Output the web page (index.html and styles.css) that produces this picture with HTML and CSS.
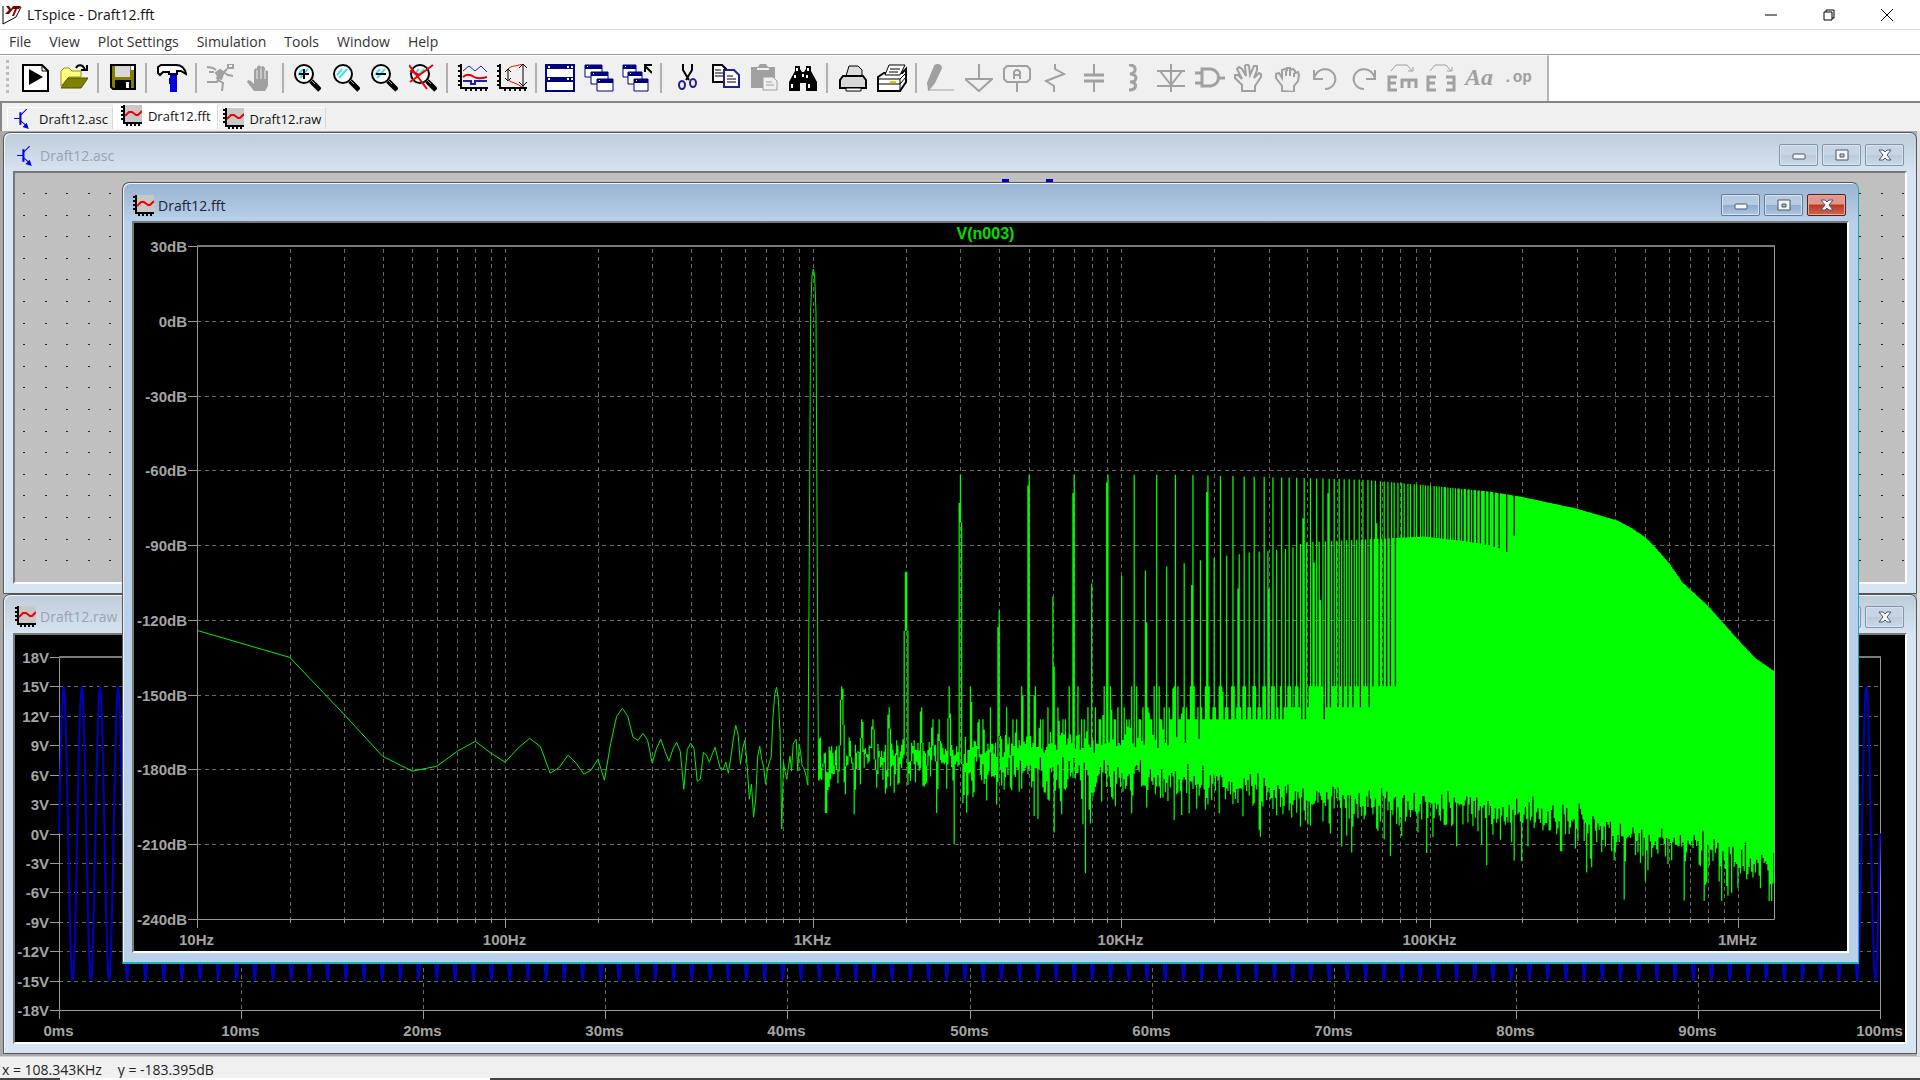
FILE: index.html
```
<!DOCTYPE html>
<html lang="en">
<head>
    <meta charset="UTF-8">
    <meta name="viewport" content="width=device-width, initial-scale=1.0">
    <title>LTspice - Draft12.fft</title>
    <link rel="stylesheet" href="styles.css">
</head>
<body>
    <!-- Shared icons -->
    <svg class="symbols" aria-hidden="true">
        <symbol id="icon-chart" viewBox="0 0 21 21">
            <path d="M3 0h18v18H3z" fill="#c8c8c8"/>
            <path d="M3 0v18h18" fill="none" stroke="#000" stroke-width="2"/>
            <path d="M0 2h3M0 6h3M0 10h3M0 14h3M6 18v3M10 18v3M14 18v3M18 18v3" fill="none" stroke="#000" stroke-width="2"/>
            <path d="M4 11l4-4h3l4 3h2l4-4" fill="none" stroke="#f00000" stroke-width="2"/>
        </symbol>
        <symbol id="icon-transistor" viewBox="0 0 16 20">
            <path d="M0 10h6M12 1L6 7M6 12l7 6" fill="none" stroke="#0000e0" stroke-width="1"/>
            <path d="M5 4h2v12H5zM14 20l-6-2 4-4z" fill="#0000f0"/>
        </symbol>
        <symbol id="icon-min" viewBox="0 0 14 12">
            <rect x="1" y="5" width="12" height="5" rx="1" fill="#f4f6fa" stroke="#4d566b"/>
        </symbol>
        <symbol id="icon-max" viewBox="0 0 14 12">
            <path d="M1 1h12v10H1zM5 5v3h4V5z" fill="#f4f6fa" stroke="#4d566b" fill-rule="evenodd"/>
        </symbol>
        <symbol id="icon-close" viewBox="0 0 14 12">
            <path d="M1 1h4l2 2 2-2h4L9 6l4 5H9L7 9l-2 2H1l4-5z" fill="#fafafa" stroke="#4d566b"/>
        </symbol>
        <symbol id="icon-lens" viewBox="0 0 28 28">
            <circle cx="11" cy="10" r="9" fill="#fff" stroke="#000" stroke-width="2"/>
            <path d="M5 11l5-6M7 14l8-9" stroke="#40e0f0" stroke-width="2"/>
            <path d="M18 17l9 9" stroke="#000" stroke-width="5"/>
            <path d="M18 16l4 4" stroke="#999" stroke-width="1"/>
        </symbol>
    </svg>

    <header class="title-bar">
        <svg class="app-logo" viewBox="0 0 20 20" aria-hidden="true">
            <path d="M1 1v18l13-7L19 2" fill="#fff" stroke="#000"/>
            <path d="M4 1h3l2 3 2-3h8l-2 3h-2l-3 7h-2l3-7h-2l-4 5H3l4-4z" fill="#800000"/>
        </svg>
        <h1 class="app-title">LTspice - Draft12.fft</h1>
        <div class="app-controls">
            <button class="app-btn" aria-label="Minimize"><svg viewBox="0 0 12 12"><path d="M0 6h12"/></svg></button>
            <button class="app-btn" aria-label="Restore"><svg viewBox="0 0 12 12"><path d="M1 3h8v8H1zM3 3V1h8v8H9"/></svg></button>
            <button class="app-btn" aria-label="Close"><svg viewBox="0 0 12 12"><path d="M0 0l12 12M12 0L0 12"/></svg></button>
        </div>
    </header>

    <nav class="menu-bar">
        <button class="menu-item">File</button>
        <button class="menu-item">View</button>
        <button class="menu-item">Plot Settings</button>
        <button class="menu-item">Simulation</button>
        <button class="menu-item">Tools</button>
        <button class="menu-item">Window</button>
        <button class="menu-item">Help</button>
    </nav>

    <div class="toolbar-row">
        <div class="toolbar">
            <span class="grip"></span>
            <div class="tool-group">
                <button class="tool" aria-label="New schematic"><svg viewBox="0 0 28 28"><path d="M2 1h19l6 6v20H2z" fill="#fff" stroke="#000" stroke-width="2"/><path d="M21 1v6h6" fill="none" stroke="#000"/><path d="M8 5l14 8-14 8z"/></svg></button>
                <button class="tool" aria-label="Open"><svg viewBox="0 0 28 28"><path d="M1 22V7l3-3h5l3 3h9v6H9z" fill="#ffff80" stroke="#999900"/><path d="M1 24l7-10h20l-7 10z" fill="#808000" stroke="#505000"/><path d="M16 4c2-4 7-4 9 2M21 6h6V1" fill="none" stroke="#000" stroke-width="2"/></svg></button>
            </div>
            <span class="divider"></span>
            <div class="tool-group">
                <button class="tool" aria-label="Save"><svg viewBox="0 0 28 28"><path d="M3 1h24v24H5l-2-2z" fill="#808000" stroke="#000" stroke-width="2"/><path d="M7 2h15v11H7z" fill="#d8d8d8"/><path d="M23 2h3v4h-3z" fill="#fff"/><path d="M7 16h16v9H7z"/><path d="M18 18h3v6h-3z" fill="#fff"/></svg></button>
            </div>
            <span class="divider divider-wide"></span>
            <div class="tool-group">
                <button class="tool" aria-label="Control panel"><svg viewBox="0 0 30 28"><path d="M1 3l3-2h15c6 0 9 4 10 9l-5-3h-4v3H12V8H6l-3 3-2-2z" fill="#fff" stroke="#000" stroke-width="2"/><path d="M13 11h7v17h-7z" fill="#0000e8"/><path d="M12 14h2v6h-2z" fill="#000080"/></svg></button>
            </div>
            <span class="divider"></span>
            <div class="tool-group">
                <button class="tool" aria-label="Run" disabled><svg viewBox="0 0 28 28"><path d="M22 0h5v4h-5zM1 3l6 1 3 2M3 8h5M21 5l-8 8-3-4 4-3 8 5 5 1M14 10l-3 8H1M12 16l5 3-1 8" fill="none" stroke="#a0a0a0" stroke-width="2"/><path d="M12 7l7 0-3 9-6-1z" fill="#a0a0a0"/></svg></button>
                <button class="tool" aria-label="Halt" disabled><svg viewBox="0 0 28 28"><path d="M9 27l-7-9 1-2 3 1 3 3V6l2-2 1 1V3l2-2 2 2 2-1 2 2v2l3 1v15l-3 5z" fill="#a0a0a0"/><path d="M12 6v9M16 4v11M20 6v9" stroke="#f0f0f0"/></svg></button>
            </div>
            <span class="divider"></span>
            <div class="tool-group">
                <button class="tool" aria-label="Zoom in"><svg viewBox="0 0 28 28"><use href="#icon-lens"/><path d="M6 10h10M11 5v10" stroke="#000" stroke-width="2"/></svg></button>
                <button class="tool" aria-label="Pan"><svg viewBox="0 0 28 28"><use href="#icon-lens"/></svg></button>
                <button class="tool" aria-label="Zoom out"><svg viewBox="0 0 28 28"><use href="#icon-lens"/><path d="M6 10h10" stroke="#000" stroke-width="2"/></svg></button>
                <button class="tool" aria-label="Zoom full extents"><svg viewBox="0 0 28 28"><use href="#icon-lens"/><path d="M0 1l18 24M24 1L1 18M1 7l10 4" stroke="#f00000" stroke-width="2"/></svg></button>
            </div>
            <span class="divider divider-wide"></span>
            <div class="tool-group">
                <button class="tool" aria-label="Autorange"><svg viewBox="0 0 30 28"><path d="M3 0v24h27M0 2h3M0 7h3M0 12h3M0 17h3M0 21h3M8 24v3M13 24v3M18 24v3M23 24v3M28 24v3" fill="none" stroke="#000" stroke-width="2"/><path d="M5 7l6-5 6 5 6-5 6 6" fill="none" stroke="#2020b0"/><path d="M5 13c4-4 8-2 11 0s6 2 13 0" fill="none" stroke="#e00000" stroke-width="2"/><path d="M5 17h8v3h4v-3h12" fill="none" stroke="#2020b0" stroke-width="2"/></svg></button>
                <button class="tool" aria-label="Plot limits"><svg viewBox="0 0 30 28"><path d="M3 0v24h27M0 2h3M0 7h3M0 12h3M0 17h3M0 21h3M8 24v3M13 24v3M18 24v3M23 24v3M28 24v3" fill="none" stroke="#000" stroke-width="2"/><path d="M11 5v12M8 8l3-3 3 3M8 14l3 3 3-3M26 0v23M22 4l4-4 4 4M22 18l4 4 4-4" fill="none" stroke="#000"/><path d="M11 5C15 1 18 3 25 0M11 16c4 3 9 3 14 7" fill="none" stroke="#f00000"/></svg></button>
            </div>
            <span class="divider"></span>
            <div class="tool-group">
                <button class="tool" aria-label="Tile"><svg viewBox="0 0 30 28"><path d="M1 1h28v26H1z" fill="#fff" stroke="#000080" stroke-width="2"/><path d="M1 1h28v4H1zM1 13h28v5H1z" fill="#000080"/><path d="M3 2h2v2H3zM22 2h2v2h-2zM26 2h2v2h-2zM3 14h2v2H3zM22 14h2v2h-2zM26 14h2v2h-2z" fill="#fff"/></svg></button>
                <button class="tool" aria-label="Cascade"><svg viewBox="0 0 30 28"><g fill="#fff" stroke="#000080"><path d="M1 1h17v12H1z"/><path d="M7 8h17v12H7z"/><path d="M13 15h16v12H13z"/></g><path d="M1 1h17v4H1zM7 8h17v4H7zM13 15h16v4H13z" fill="#000080"/><path d="M3 2h1v1H3zM9 9h1v1H9zM15 16h1v1h-1z" fill="#fff"/></svg></button>
                <button class="tool" aria-label="Restore windows"><svg viewBox="0 0 30 28"><g fill="#fff" stroke="#000080"><path d="M1 1h13v12H1z"/><path d="M6 8h14v12H6z"/><path d="M12 15h14v12H12z"/></g><path d="M1 1h13v4H1zM6 8h14v4H6zM12 15h14v4H12z" fill="#000080"/><path d="M3 2h1v1H3zM8 9h1v1H8zM14 16h1v1h-1z" fill="#fff"/><path d="M30 9l-7-7M23 8V1h7" fill="none" stroke="#000" stroke-width="2"/></svg></button>
            </div>
            <span class="divider divider-wide"></span>
            <div class="tool-group">
                <button class="tool" aria-label="Cut"><svg viewBox="0 0 28 28"><path d="M10 0v6l6 10M19 0v6l-6 10" fill="none" stroke="#000" stroke-width="2"/><g fill="none" stroke="#202090" stroke-width="2"><ellipse cx="9" cy="21" rx="3" ry="4"/><ellipse cx="20" cy="19" rx="3" ry="4"/></g></svg></button>
                <button class="tool" aria-label="Copy"><svg viewBox="0 0 28 28"><path d="M1 1h9l4 4v13H1z" fill="#fff" stroke="#000" stroke-width="2"/><path d="M3 6h6M3 9h8M3 12h8" stroke="#000"/><path d="M12 6h10l5 5v12H12z" fill="#fff" stroke="#202090" stroke-width="2"/><path d="M15 12h6M15 15h9M15 18h9" stroke="#000"/></svg></button>
                <button class="tool" aria-label="Paste" disabled><svg viewBox="0 0 28 28"><path d="M1 3h7l2-3h6l2 3h7v21H1z" fill="#a0a0a0"/><path d="M7 4h12v2H7z" fill="#f0f0f0"/><path d="M13 13h10l4 4v9H13z" fill="#f0f0f0" stroke="#a0a0a0"/><path d="M16 18h6M16 21h8" stroke="#a0a0a0"/></svg></button>
                <button class="tool" aria-label="Find"><svg viewBox="0 0 30 28"><path d="M7 2h5v3l2 3h2l2-3V2h5v5l6 11v9H18v-8h-6v8H1v-9L7 7z"/><path d="M8 4h2v3H8zM6 11h2v3H6zM3 20h2v4H3zM19 4h2v3h-2zM18 11h2v3h-2zM20 20h2v4h-2zM14 10h2v3h-2z" fill="#fff"/></svg></button>
            </div>
            <span class="divider divider-wide"></span>
            <div class="tool-group">
                <button class="tool" aria-label="Print"><svg viewBox="0 0 28 28"><path d="M7 12l3-10h9l4 4v6" fill="#ddd" stroke="#000"/><path d="M4 12h20l3 4v8H1v-8z" fill="#d8d8d8" stroke="#000" stroke-width="2"/><path d="M7 24h15v3H7z" fill="#fff" stroke="#000"/></svg></button>
                <button class="tool" aria-label="Print setup"><svg viewBox="0 0 30 28"><path d="M1 13l6-4h18l4-4v13l-6 9H1z" fill="#fff" stroke="#000" stroke-width="2"/><path d="M8 11l4-10h16l-5 10z" fill="#fff" stroke="#000"/><path d="M13 5h10M12 8h9M1 15h22v12M1 20h22l6-7M23 15l6-6" fill="none" stroke="#000"/><path d="M13 18h6" stroke="#d0d000" stroke-width="2"/></svg></button>
            </div>
            <span class="divider"></span>
            <div class="tool-group tool-group-edit">
                <button class="tool" aria-label="Wire" disabled><svg viewBox="0 0 28 28"><path d="M2 19L9 2c2-2 6-1 6 2L8 19l-5 6z" fill="#a0a0a0"/><path d="M2 25v1h26" fill="none" stroke="#a0a0a0" stroke-width="1"/></svg></button>
                <button class="tool" aria-label="Ground" disabled><svg viewBox="0 0 28 28"><path d="M14 0v15M0 15h27L14 27z"/></svg></button>
                <button class="tool" aria-label="Label net" disabled><svg viewBox="0 0 28 28"><path d="M4 2h20l3 3v10l-3 3H4l-3-3V5zM14 19v9M11 15V8l2-2h2l2 2v7M11 11h6"/></svg></button>
                <button class="tool" aria-label="Resistor" disabled><svg viewBox="0 0 28 28"><path d="M13 0v5l9 5L4 17l8 5v6"/></svg></button>
                <button class="tool" aria-label="Capacitor" disabled><svg viewBox="0 0 28 28"><path d="M14 0v10M14 18v10"/><path d="M4 11h20M4 17h20" stroke-width="3"/></svg></button>
                <button class="tool" aria-label="Inductor" disabled><svg viewBox="0 0 28 28"><path d="M10 1c8 0 8 8 1 9 8 0 8 8 0 8 8 0 7 8-1 8" stroke-width="3"/></svg></button>
                <button class="tool" aria-label="Diode" disabled><svg viewBox="0 0 30 28"><path d="M15 0v28M1 7h28M4 7l11 14L26 7M1 22h28"/></svg></button>
                <button class="tool" aria-label="Component" disabled><svg viewBox="0 0 30 28"><path d="M7 5h9c10 2 10 15 0 17H7zM0 9h7M0 19h7M23 14h7" stroke-width="3"/></svg></button>
                <button class="tool" aria-label="Move" disabled><svg viewBox="0 0 28 28"><path d="M8 27v-6L1 14v-3h3l4 4L3 5l2-2 3 2 4 7-1-10 2-2 2 2 1 9 4-9h3v4l-3 8 5-5 2 1v3l-6 9v5z"/></svg></button>
                <button class="tool" aria-label="Drag" disabled><svg viewBox="0 0 28 28"><path d="M9 27v-5l-6-8v-4l3-1 3 5V6l3-1 2 1V4h3v2l3-1 2 2v2l3-1 1 3-1 6-4 5v6zM13 7v5M17 7v5M21 9v4"/></svg></button>
                <button class="tool" aria-label="Undo" disabled><svg viewBox="0 0 28 28"><path d="M3 14C7 3 18 3 23 10c4 8-2 15-9 15M3 6v9h9"/></svg></button>
                <button class="tool" aria-label="Redo" disabled><svg viewBox="0 0 28 28"><path d="M25 14C21 3 10 3 5 10c-4 8 2 15 9 15M25 6v9h-9"/></svg></button>
                <button class="tool" aria-label="Rotate" disabled><svg viewBox="0 0 32 28"><path d="M5 7l5-6h11l5 6M22 7h5V3" stroke-width="1"/><path d="M11 13H3v13h8M3 19h7M16 24v-8h14v8M23 16v8" stroke-width="3"/></svg></button>
                <button class="tool" aria-label="Mirror" disabled><svg viewBox="0 0 32 28"><path d="M5 7l5-6h11l5 6M22 7h5V3" stroke-width="1"/><path d="M11 13H3v13h8M3 19h7M21 13h8v13h-8M29 19h-7" stroke-width="3"/></svg></button>
                <button class="tool tool-text" aria-label="Text" disabled>Aa</button>
                <button class="tool tool-op" aria-label="SPICE directive" disabled>.op</button>
            </div>
        </div>
    </div>

    <div class="tab-strip">
        <button class="tab"><svg class="tab-icon"><use href="#icon-transistor"/></svg>Draft12.asc</button>
        <button class="tab active"><svg class="tab-icon"><use href="#icon-chart"/></svg>Draft12.fft</button>
        <button class="tab"><svg class="tab-icon"><use href="#icon-chart"/></svg>Draft12.raw</button>
    </div>

    <main class="desktop">
        <section class="window window-asc">
            <div class="window-title">
                <svg class="window-icon"><use href="#icon-transistor"/></svg>
                <h2>Draft12.asc</h2>
                <button class="win-btn" aria-label="Minimize"><svg><use href="#icon-min"/></svg></button>
                <button class="win-btn" aria-label="Maximize"><svg><use href="#icon-max"/></svg></button>
                <button class="win-btn" aria-label="Close"><svg><use href="#icon-close"/></svg></button>
            </div>
            <div class="window-body schematic"><svg id="schematic" class="drawing"></svg></div>
        </section>

        <section class="window window-raw">
            <div class="window-title">
                <svg class="window-icon"><use href="#icon-chart"/></svg>
                <h2>Draft12.raw</h2>
                <button class="win-btn" aria-label="Minimize"><svg><use href="#icon-min"/></svg></button>
                <button class="win-btn" aria-label="Maximize"><svg><use href="#icon-max"/></svg></button>
                <button class="win-btn" aria-label="Close"><svg><use href="#icon-close"/></svg></button>
            </div>
            <div class="window-body"><svg id="raw-plot" class="drawing"></svg></div>
        </section>

        <section class="window window-fft active">
            <div class="window-title">
                <svg class="window-icon"><use href="#icon-chart"/></svg>
                <h2>Draft12.fft</h2>
                <button class="win-btn" aria-label="Minimize"><svg><use href="#icon-min"/></svg></button>
                <button class="win-btn" aria-label="Maximize"><svg><use href="#icon-max"/></svg></button>
                <button class="win-btn close" aria-label="Close"><svg><use href="#icon-close"/></svg></button>
            </div>
            <div class="window-body"><svg id="fft-plot" class="drawing"></svg></div>
        </section>
    </main>

    <footer class="status-bar">
        <span>x = 108.343KHz</span>
        <span>y = -183.395dB</span>
    </footer>
    <div class="screen-edge"></div>

    <script src="plots.js"></script>
</body>
</html>
```

FILE: styles.css
```
* {
    margin: 0;
    padding: 0;
    box-sizing: border-box;
}
body {
    height: 100vh;
    display: flex;
    flex-direction: column;
    overflow: hidden;
    background: #f0f0f0;
    color: #111;
    font-family: 'Open Sans', 'Noto Sans', sans-serif;
    font-size: 14px;
}
button {
    border: none;
    background: none;
    font: inherit;
    color: inherit;
}
.symbols {
    position: absolute;
    width: 0;
    height: 0;
}

/* Application title and menu */
.title-bar {
    height: 30px;
    display: flex;
    align-items: center;
    background: #fff;
    border-bottom: 1px solid #dcdcdc;
}
.app-logo {
    width: 20px;
    height: 20px;
    margin: 0 5px 0 2px;
}
.app-title {
    flex: 1;
    font-size: 14px;
    font-weight: 400;
}
.app-controls {
    display: flex;
    padding-right: 4px;
}
.app-btn {
    width: 58px;
    height: 29px;
    display: flex;
    align-items: center;
    justify-content: center;
}
.app-btn svg {
    width: 12px;
    height: 12px;
    fill: none;
    stroke: #000;
}
.menu-bar {
    height: 25px;
    display: flex;
    align-items: center;
    padding-bottom: 2px;
    background: #fff;
    border-bottom: 1px solid #999;
    color: #333;
}
.menu-item {
    padding: 0 9px;
}

/* Toolbar */
.toolbar-row {
    height: 48px;
    display: flex;
    background: #fff;
    border-bottom: 2px solid #868686;
}
.toolbar {
    display: flex;
    align-items: center;
    padding: 0 10px 2px 0;
    background: #f0f0f0;
    border-right: 2px solid #b4b4b4;
    border-top: 1px solid #fff;
}
.grip {
    width: 3px;
    height: 36px;
    margin: 0 7px 0 6px;
    background: repeating-linear-gradient(#bbb 0 3px, #f0f0f0 3px 6px);
}
.tool-group {
    display: flex;
}
.tool {
    width: 38px;
    height: 38px;
    display: flex;
    align-items: center;
    justify-content: center;
}
.tool:nth-child(even) {
    width: 39px;
}
.tool svg {
    height: 28px;
    max-width: 32px;
}
.tool-group-edit svg {
    fill: none;
    stroke: #a0a0a0;
    stroke-width: 2;
}
.tool-text {
    font-family: 'Liberation Serif', serif;
    font-size: 24px;
    font-style: italic;
    font-weight: 700;
    color: #a0a0a0;
}
.tool-op {
    font-family: 'Liberation Mono', monospace;
    font-size: 16px;
    font-weight: 700;
    color: #a0a0a0;
}
.divider {
    width: 2px;
    height: 30px;
    margin: 0 4px;
    background: #b0b0b0;
}
.divider-wide {
    margin-right: 6px;
}

/* Document tabs */
.tab-strip {
    height: 28px;
    display: flex;
    align-items: flex-end;
    padding: 0 0 2px 5px;
    border-left: 2px solid #868686;
}
.tab {
    height: 22px;
    display: flex;
    align-items: center;
    padding: 0 4px;
    font-size: 13px;
    border-left: 1px solid #fff;
    border-top: 1px solid #fff;
    border-right: 1px solid #d8d8d8;
}
.tab.active {
    height: 25px;
    padding: 0 6px 3px 7px;
    background: #fff;
}
.tab-icon {
    width: 21px;
    height: 21px;
    margin-right: 6px;
}

/* Child windows */
.desktop {
    flex: 1;
    position: relative;
    background: #ababab;
    border-left: 2px solid #a8a8a8;
    border-right: 3px solid #e0e0e0;
}
.window {
    position: absolute;
    display: flex;
    flex-direction: column;
    padding: 0 9px 9px;
    background: linear-gradient(#bfcddb, #d7e4f2 40px);
    border: 1px solid #555;
    border-radius: 7px 7px 0 0;
    box-shadow: inset 1px 1px #f2f6fa;
    color: #9aa2aa;
}
.window-asc {
    left: 1px;
    right: 0;
    top: 1px;
    bottom: 50%;
}
.window-raw {
    left: 1px;
    right: 0;
    top: 50%;
    bottom: 2px;
}
.window-fft {
    left: 120px;
    right: 58px;
    top: 51px;
    bottom: 92px;
}
.window.active {
    background: linear-gradient(#99b4d1, #b9d1ea 40px);
    border-right-color: #20a8b8;
    border-bottom: 2px solid #20b0b8;
    color: #223;
}
.window-title {
    height: 38px;
    display: flex;
    align-items: center;
    gap: 4px;
    padding: 6px 3px 0 0;
}
.window-title h2 {
    flex: 1;
    font-size: 14px;
    font-weight: 400;
}
.window-icon {
    width: 21px;
    height: 21px;
    margin-left: 2px;
}
.window.active .window-icon {
    margin-left: 1px;
}
.win-btn {
    width: 39px;
    height: 22px;
    display: flex;
    align-items: center;
    justify-content: center;
    border: 1px solid #8492aa;
    border-radius: 2px;
    background: linear-gradient(#c6d4e4 50%, #b9c9dc 50%, #cbdaea);
    box-shadow: inset 0 0 0 1px #d8e4f0;
}
.active .win-btn {
    border-color: #64799a;
    background: linear-gradient(#b6cbe2 50%, #8faacb 50%, #adc8e4);
}
.active .win-btn.close {
    border-color: #5c1a1a;
    background: linear-gradient(#e0988c 45%, #b83820 50%, #d06850);
    box-shadow: inset 0 0 0 1px #e8a898;
}
.win-btn svg {
    width: 14px;
    height: 12px;
}
.window-body {
    flex: 1;
    min-height: 0;
    background: #000;
    border-top: 2px solid #777;
    border-left: 2px solid #777;
    border-right: 2px solid #fff;
    border-bottom: 2px solid #fff;
}
.schematic {
    background: #c0c0c0;
}
.drawing {
    display: block;
    width: 100%;
    height: 100%;
}

/* Plots */
.axis {
    fill: none;
    stroke: #9a9a9a;
    stroke-width: 1;
}
.axis-top {
    stroke: #7a7a7a;
    stroke-width: 2;
}
.grid {
    fill: none;
    stroke: #686868;
    stroke-width: 1;
    stroke-dasharray: 4 4 4 3;
}
.axis-label,
.trace-label {
    font-family: 'Liberation Sans', sans-serif;
    font-size: 15px;
    font-weight: 700;
    fill: #a4a4a4;
}
.trace-label {
    font-size: 16px;
    fill: #00e000;
}
.anchor-end {
    text-anchor: end;
}
.anchor-middle {
    text-anchor: middle;
}
.trace-line {
    fill: none;
    stroke: #00f000;
    stroke-width: 1;
}
.trace-fill {
    fill: #00ff00;
}
.trace-blue {
    fill: none;
    stroke: #0000c0;
    stroke-width: 2;
}
.snap-dots {
    fill: #222;
}
.wire {
    fill: #0000c8;
}

/* Status bar */
.status-bar {
    height: 22px;
    display: flex;
    align-items: center;
    gap: 16px;
    padding: 3px 0 0 2px;
    border-top: 1px solid #d0d0d0;
    color: #222;
}
.screen-edge {
    height: 2px;
    background: linear-gradient(90deg, #444 60px, #fff 60px 490px, #444 490px);
}
```

FILE: plots.js
```
const SVG_NS = 'http://www.w3.org/2000/svg';

function add(parent, name, attrs, text) {
    const el = document.createElementNS(SVG_NS, name);
    for (const key in attrs) el.setAttribute(key, attrs[key]);
    if (text) el.textContent = text;
    parent.appendChild(el);
    return el;
}

// Repeatable random numbers, so that the noise floor never changes on redraw
function makeRandom(seed) {
    return function () {
        seed = (seed * 1664525 + 1013904223) % 4294967296;
        return (seed + 1) / 4294967297;
    };
}

// Linear interpolation in a table of [x, y] points
function lookup(table, x) {
    if (x <= table[0][0]) return table[0][1];
    for (let i = 1; i < table.length; i++) {
        if (x <= table[i][0]) {
            const [x0, y0] = table[i - 1];
            const [x1, y1] = table[i];
            return y0 + (y1 - y0) * (x - x0) / (x1 - x0);
        }
    }
    return table[table.length - 1][1];
}

// ---- Spectrum data: one value for each 10Hz bin, as depth on a 1577 x 674 chart ----
const BASE_W = 1577;
const BASE_H = 674;
const BINS = 131072;
const DECADES = Math.log10(BINS);
const xOfBin = bin => Math.log10(bin) / DECADES * BASE_W;

const lowBins = [
    385, 412, 469, 511, 526, 521, 506, 496, 508, 517, 503, 493, 501, 528, 522, 510, 518, 529, 525, 514,
    535, 498, 471, 463, 471, 492, 495, 488, 495, 518, 503, 494, 506, 516, 504, 497, 506, 544, 504, 498,
    503, 536, 534, 507, 510, 517, 509, 502, 514, 524, 524, 517, 528, 512, 494, 480, 489, 519, 503, 495,
    521, 554, 539, 572, 554, 511, 501, 514, 522, 539, 524, 517, 512, 471, 449, 442, 454, 487, 584, 517,
    527, 534, 522, 511, 526, 499, 496, 494, 526, 499, 508, 521, 522, 527, 532, 540, 320, 66, 30, 23,
    30, 66, 320, 535
];
const oddPeaks = [
    [752, 229], [983, 229], [1093, 232], [1166, 234], [1233, 240], [1293, 246], [1323, 251], [1379, 263],
    [1420, 275], [1435, 283], [1448, 292], [1456, 300], [1471, 317], [1485, 337], [1510, 360], [1527, 379],
    [1541, 395], [1558, 413], [1577, 426]
];
const evenPeaks = [
    [709, 326], [802, 365], [856, 351], [895, 338], [925, 330], [949, 325], [970, 321], [1018, 312],
    [1053, 307], [1093, 303], [1106, 297], [1163, 294], [1228, 291], [1243, 293], [1263, 295], [1283, 298],
    [1303, 303], [1317, 311], [1577, 520]
];
const noiseLevel = [
    [616, 510], [925, 507], [1166, 516], [1303, 513], [1403, 520], [1448, 529], [1541, 541], [1577, 552]
];

function makeSpectrum() {
    const random = makeRandom(2024);
    const data = new Float32Array(BINS + 1);
    for (let bin = 1; bin <= BINS; bin++) {
        if (bin <= lowBins.length) {
            data[bin] = lowBins[bin - 1];
            continue;
        }
        const x = xOfBin(bin);
        const spread = x < 900 ? 30 : 25;
        let y = lookup(noiseLevel, x) - spread * Math.log10(-Math.log(random()));
        const harmonic = Math.round(bin / 100);
        const offset = Math.abs(bin - harmonic * 100);
        const odd = harmonic % 2 === 1;
        const peak = lookup(odd ? oddPeaks : evenPeaks, x);
        const skirt = [0, 20, 65, 300];
        if (offset < 4 && harmonic > 1) y = Math.min(y, peak + skirt[offset]);
        if (Math.abs(offset - 24) < 2) y = Math.min(y, (odd ? 441 : 462) + Math.abs(offset - 24) * 14);
        if (Math.abs(offset - 44) < 2) y = Math.min(y, 474 + Math.abs(offset - 44) * 12);
        data[bin] = y;
    }
    return data;
}
const spectrum = makeSpectrum();

function depthAt(x) {
    const bin = Math.min(BINS, Math.pow(10, x / BASE_W * DECADES));
    const i = Math.min(BINS - 1, Math.floor(bin));
    return spectrum[i] + (spectrum[i + 1] - spectrum[i]) * (bin - i);
}

function drawAxes(svg, box, rows, cols) {
    const { left, top, right, bottom } = box;
    let grid = '';
    let ticks = '';
    rows.forEach((label, i) => {
        const y = Math.round(top + (bottom - top) * i / (rows.length - 1)) + 0.5;
        if (i > 0 && i < rows.length - 1) grid += `M${left} ${y}H${right}`;
        ticks += `M${left - 9} ${y}H${left}`;
        add(svg, 'text', { x: left - 10, y: y + 5, class: 'axis-label anchor-end' }, label);
    });
    cols.forEach(col => {
        const x = Math.round(left + (right - left) * col.at) + 0.5;
        if (col.at > 0 && col.at < 1) grid += `M${x} ${top + 3}V${bottom}`;
        ticks += `M${x} ${bottom}v${col.label ? 9 : 4}`;
        if (col.label) add(svg, 'text', { x: x - 1, y: bottom + 26, class: 'axis-label anchor-middle' }, col.label);
    });
    add(svg, 'path', { d: grid, class: 'grid' });
    add(svg, 'path', { d: ticks, class: 'axis' });
    add(svg, 'path', { d: `M${left + 0.5} ${top}V${bottom + 0.5}H${right + 0.5}V${top}`, class: 'axis' });
    add(svg, 'path', { d: `M${left} ${top}H${right + 1}`, class: 'axis axis-top' });
}

function drawFft() {
    const svg = document.getElementById('fft-plot');
    svg.innerHTML = '';
    const box = { left: 63, top: 23, right: svg.clientWidth - 73, bottom: svg.clientHeight - 32 };
    const rows = [];
    for (let db = 30; db >= -240; db -= 30) rows.push(db + 'dB');
    const names = ['10Hz', '100Hz', '1KHz', '10KHz', '100KHz', '1MHz'];
    const cols = [];
    names.forEach((label, decade) => {
        for (let n = 1; n < 10; n++) {
            const at = (decade + Math.log10(n)) / DECADES;
            if (at < 1) cols.push({ at, label: n === 1 ? label : '' });
        }
    });
    drawAxes(svg, box, rows, cols);
    add(svg, 'text', { x: (box.left + box.right) / 2, y: 16, class: 'trace-label anchor-middle' }, 'V(n003)');

    const sx = (box.right - box.left) / BASE_W;
    const sy = (box.bottom - box.top) / BASE_H;
    const px = x => (box.left + x * sx).toFixed(2);
    const py = y => (box.top + Math.min(y, BASE_H - 18) * sy).toFixed(1);

    // Below 1KHz the bins stand far apart: a plain line
    let line = '';
    for (let bin = 1; bin <= lowBins.length; bin++) {
        line += (bin === 1 ? 'M' : 'L') + px(xOfBin(bin)) + ' ' + py(spectrum[bin]);
    }
    add(svg, 'path', { d: line, class: 'trace-line' });

    // Above it, the range of values that falls in each column
    const step = 1.25;
    const upper = [];
    const lower = [];
    const start = xOfBin(lowBins.length);
    for (let x = start; x < BASE_W; x += step) {
        const end = Math.min(x + step, BASE_W);
        let hi = Math.min(depthAt(x), depthAt(end));
        let lo = Math.max(depthAt(x), depthAt(end));
        const lastBin = Math.min(BINS, Math.floor(Math.pow(10, end / BASE_W * DECADES)));
        for (let bin = Math.ceil(Math.pow(10, x / BASE_W * DECADES)); bin <= lastBin; bin++) {
            hi = Math.min(hi, spectrum[bin]);
            lo = Math.max(lo, spectrum[bin]);
        }
        if (x > 1199) hi = Math.min(hi, lookup(evenPeaks, x));
        if (x > 1317) hi = lookup(oddPeaks, x);
        upper.push(`V${py(hi)}H${px(end)}`);
        lower.push(`V${py(Math.max(lo, hi + 1))}H${px(x)}`);
    }
    const fill = `M${px(start)} ${py(535)}` + upper.join('') + lower.reverse().join('') + 'Z';
    add(svg, 'path', { d: fill, class: 'trace-fill' });
}

function drawRaw() {
    const svg = document.getElementById('raw-plot');
    svg.innerHTML = '';
    const box = { left: 44, top: 22, right: svg.clientWidth - 25, bottom: svg.clientHeight - 33 };
    const rows = [];
    for (let v = 18; v >= -18; v -= 3) rows.push(v + 'V');
    const cols = [];
    for (let t = 0; t <= 100; t += 10) cols.push({ at: t / 100, label: t + 'ms' });
    drawAxes(svg, box, rows, cols);

    const middle = (box.top + box.bottom) / 2;
    const scale = (box.bottom - box.top) / 36;
    let d = '';
    for (let i = 0; i <= 2000; i++) {
        const x = box.left + (box.right - box.left) * i / 2000;
        const y = middle - 15 * scale * Math.sin(i * Math.PI / 10);
        d += (i ? 'L' : 'M') + x.toFixed(1) + ' ' + y.toFixed(1);
    }
    add(svg, 'path', { d, class: 'trace-blue' });
}

function drawSchematic() {
    const svg = document.getElementById('schematic');
    svg.innerHTML = '';
    const pitch = 21.6;
    let d = '';
    for (let y = 20; y < svg.clientHeight; y += pitch) {
        for (let x = 8; x < svg.clientWidth; x += pitch) {
            d += `M${Math.round(x)} ${Math.round(y)}h2v1h-2z`;
        }
    }
    add(svg, 'path', { d, class: 'snap-dots' });
    const middle = Math.round(svg.clientWidth * 0.522);
    add(svg, 'path', { d: `M${middle} 6h7v4h-7zM${middle + 44} 6h7v4h-7z`, class: 'wire' });
}

function drawAll() {
    drawFft();
    drawRaw();
    drawSchematic();
}
drawAll();
window.addEventListener('resize', drawAll);
```
